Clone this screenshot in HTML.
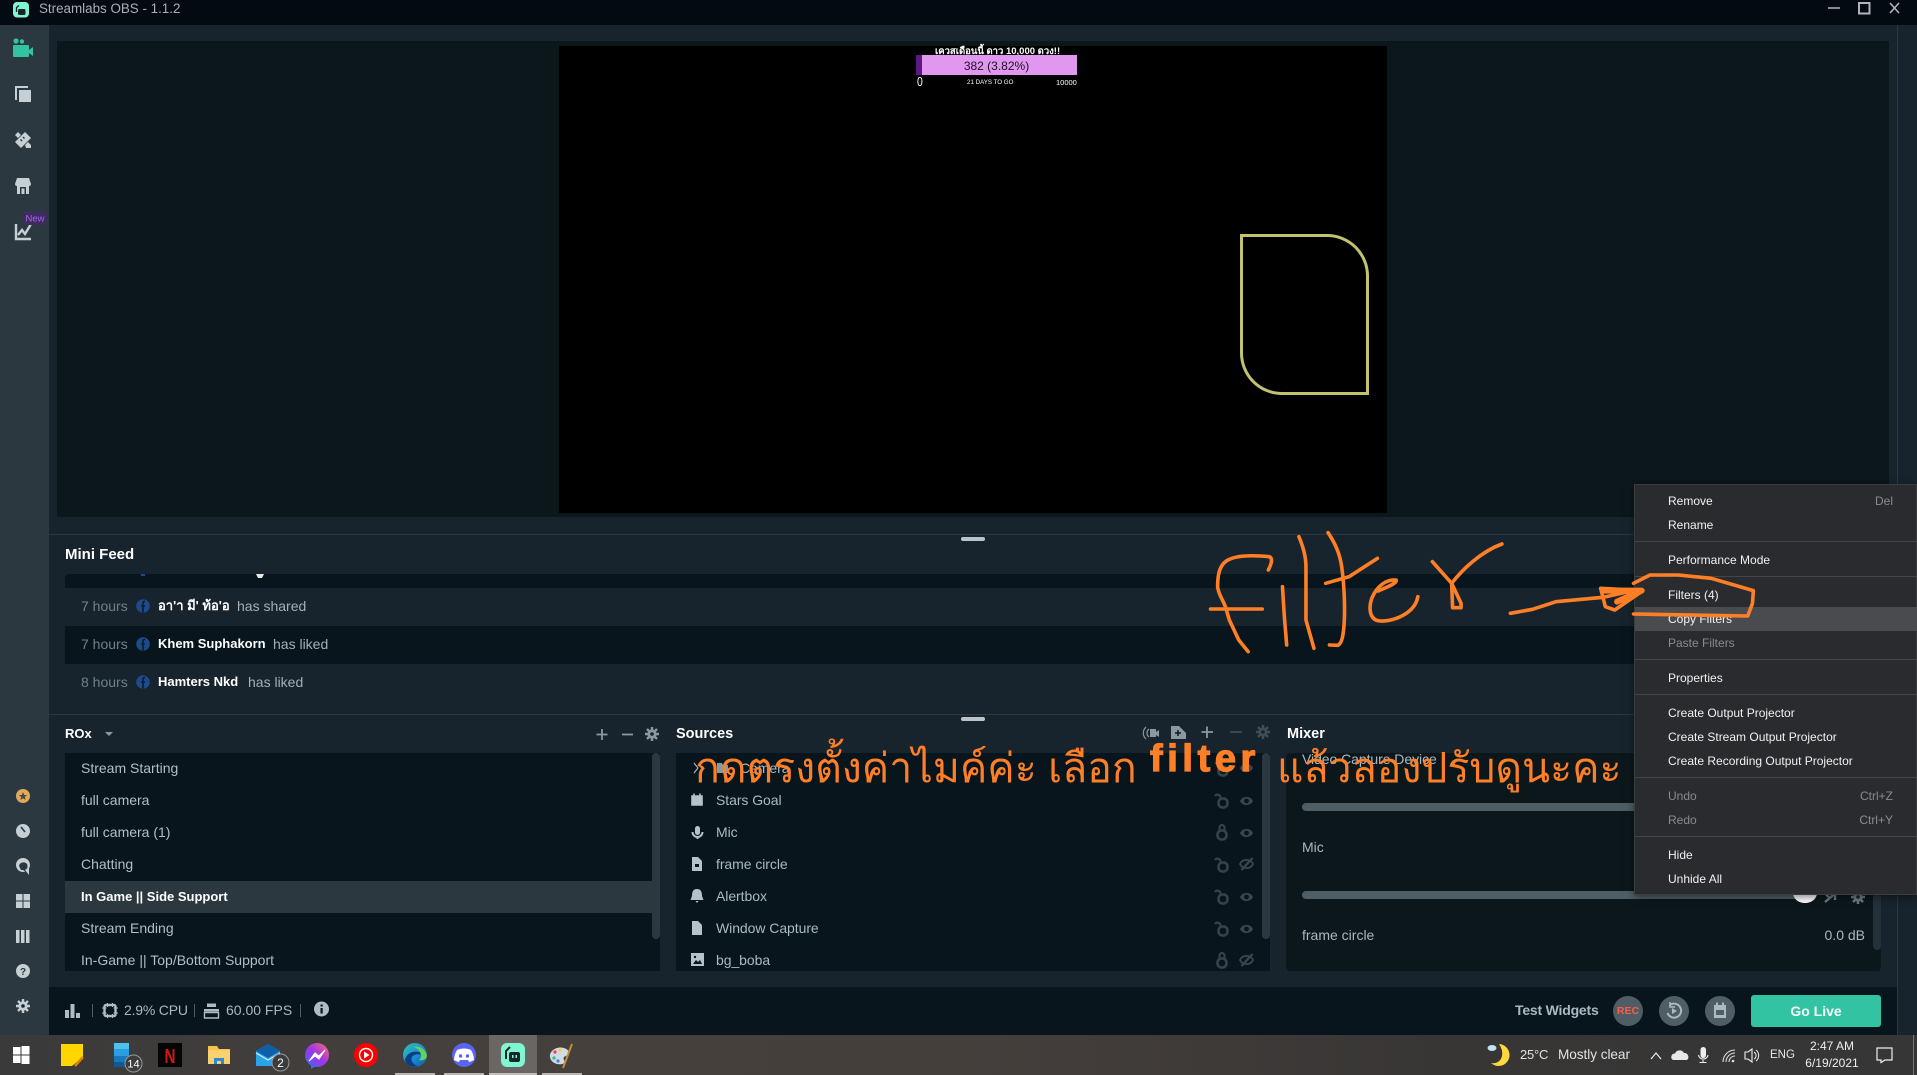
<!DOCTYPE html>
<html><head><meta charset="utf-8"><title>Streamlabs OBS</title>
<style>
*{box-sizing:border-box}
html,body{margin:0;padding:0;width:1917px;height:1075px;overflow:hidden;background:#17242d;font-family:"Liberation Sans","DejaVu Sans","Noto Sans CJK SC",sans-serif}
.a{position:absolute}
.t{position:absolute;white-space:nowrap;line-height:20px;height:20px}
.m{position:absolute;left:1668px;white-space:nowrap;line-height:20px;height:20px;font-size:12px;color:#f1f1f1}
.d{color:#8a8b8e}
.sep{position:absolute;left:1635px;width:282px;height:1px;background:#444547}
.s{font-size:14px;color:#b1bfc5;left:81px}
.src{font-size:14px;letter-spacing:-.06px;color:#a9bac2;left:716px}
.h{font-size:14.5px;font-weight:bold;color:#fff}
.fd{font-size:14px}
.g{color:#70808a}.w{color:#fff;font-weight:bold;font-size:13px}.l{color:#a3b0b7}
.f{font-size:14px;color:#a9b8c0}
.th{color:#ff7f27;font-family:"Liberation Sans","DejaVu Sans","WenQuanYi Zen Hei","Noto Sans CJK SC",sans-serif;font-size:41px;line-height:50px;height:50px;position:absolute;white-space:nowrap}
svg{position:absolute;left:0;top:0}
</style></head>
<body>
<!-- title bar -->
<div class="a" style="left:0;top:0;width:1917px;height:25px;background:#040a12"></div>
<div class="t" style="left:39px;top:-1px;font-size:13.4px;color:#a6b0b6">Streamlabs OBS - 1.1.2</div>
<!-- nav -->
<div class="a" style="left:0;top:25px;width:49px;height:1010px;background:#2b383f"></div>
<!-- preview -->
<div class="a" style="left:57px;top:41px;width:1832px;height:476px;background:#0c171c"></div>
<div class="a" style="left:559px;top:46px;width:828px;height:467px;background:#000"></div>
<div class="a" style="left:1897px;top:25px;width:1px;height:1010px;background:#2b383f"></div>
<!-- goal widget -->
<div class="t" style="left:935px;top:42px;font-size:9.5px;font-weight:bold;color:#fff">เควสเดือนนี้ ดาว 10,000 ดวง!!</div>
<div class="a" style="left:916px;top:55px;width:161px;height:20px;background:#e196f0"></div>
<div class="a" style="left:916px;top:55px;width:6px;height:20px;background:#5c1780"></div>
<div class="t" style="left:916px;top:56px;width:161px;text-align:center;font-size:12px;color:#1c1420">382 (3.82%)</div>
<div class="t" style="left:917px;top:72px;font-size:13px;color:#fff;transform-origin:0 50%;transform:scaleX(.8)">0</div>
<div class="t" style="left:967px;top:73px;font-size:6.2px;color:#fff">21 DAYS TO GO</div>
<div class="t" style="left:1056px;top:73px;font-size:7.5px;color:#fff">10000</div>
<div class="a" style="left:1240px;top:234px;width:129px;height:161px;border:3px solid #c3c36e;border-radius:0 42px 0 42px"></div>
<!-- dividers -->
<div class="a" style="left:49px;top:534px;width:1848px;height:1px;background:#2b383f"></div>
<div class="a" style="left:961px;top:537px;width:24px;height:4px;border-radius:2px;background:#b9c3c8"></div>
<div class="a" style="left:49px;top:714px;width:1848px;height:1px;background:#2b383f"></div>
<div class="a" style="left:961px;top:717px;width:24px;height:4px;border-radius:2px;background:#b9c3c8"></div>
<!-- mini feed -->
<div class="t h" style="left:65px;top:545px;font-size:15px">Mini Feed</div>
<div class="a" style="left:65px;top:574px;width:1816px;height:14px;background:#08151d;border-radius:4px 4px 0 0"></div>
<div class="a" style="left:65px;top:626px;width:1816px;height:38px;background:#08151d"></div>
<div class="t fd" style="left:81px;top:596px"><span class="g">7 hours</span></div>
<div class="t fd w" style="left:158px;top:596px">อา'า มี' ท้อ'อ</div>
<div class="t fd l" style="left:237px;top:596px">has shared</div>
<div class="t fd" style="left:81px;top:634px"><span class="g">7 hours</span></div>
<div class="t fd w" style="left:158px;top:634px">Khem Suphakorn</div>
<div class="t fd l" style="left:273px;top:634px">has liked</div>
<div class="t fd" style="left:81px;top:672px"><span class="g">8 hours</span></div>
<div class="t fd w" style="left:158px;top:672px">Hamters Nkd</div>
<div class="t fd l" style="left:248px;top:672px">has liked</div>
<!-- scenes -->
<div class="t h" style="left:65px;top:724px;font-size:13px">ROx</div>
<div class="a" style="left:65px;top:753px;width:595px;height:218px;background:#08151d"></div>
<div class="a" style="left:652px;top:753px;width:8px;height:186px;border-radius:4px;background:#2b383f"></div>
<div class="a" style="left:65px;top:881px;width:587px;height:32px;background:#2b383f"></div>
<div class="t s" style="top:758px">Stream Starting</div>
<div class="t s" style="top:790px">full camera</div>
<div class="t s" style="top:822px">full camera (1)</div>
<div class="t s" style="top:854px">Chatting</div>
<div class="t s" style="top:887px;color:#fff;font-weight:bold;font-size:13px">In Game || Side Support</div>
<div class="t s" style="top:918px">Stream Ending</div>
<div class="t s" style="top:950px">In-Game || Top/Bottom Support</div>
<!-- sources -->
<div class="t h" style="left:676px;top:724px">Sources</div>
<div class="a" style="left:676px;top:753px;width:594px;height:218px;background:#08151d"></div>
<div class="a" style="left:1262px;top:753px;width:8px;height:186px;border-radius:4px;background:#2b383f"></div>
<div class="t src" style="left:740px;top:758px">Camera</div>
<div class="t src" style="top:790px">Stars Goal</div>
<div class="t src" style="top:822px">Mic</div>
<div class="t src" style="top:854px">frame circle</div>
<div class="t src" style="top:886px">Alertbox</div>
<div class="t src" style="top:918px">Window Capture</div>
<div class="t src" style="top:950px">bg_boba</div>
<!-- mixer -->
<div class="t h" style="left:1287px;top:724px">Mixer</div>
<div class="a" style="left:1286px;top:753px;width:595px;height:218px;background:#0c171c;border-radius:4px"></div>
<div class="a" style="left:1873px;top:753px;width:8px;height:197px;border-radius:4px;background:#24313a"></div>
<div class="t f" style="left:1302px;top:749px;letter-spacing:-.06px">Video Capture Device</div>
<div class="a" style="left:1302px;top:803px;width:560px;height:8px;border-radius:4px;background:#4f5e64"></div>
<div class="t f" style="left:1302px;top:837px">Mic</div>
<div class="a" style="left:1302px;top:891px;width:500px;height:8px;border-radius:4px;background:#4f5e64"></div>
<div class="t f" style="left:1302px;top:925px">frame circle</div>
<div class="t f" style="left:1805px;top:925px;width:60px;text-align:right">0.0 dB</div>
<!-- footer -->
<div class="a" style="left:49px;top:987px;width:1848px;height:48px;background:#08151d"></div>
<div class="t f" style="left:124px;top:1000px;letter-spacing:-.2px">2.9% CPU</div>
<div class="t f" style="left:226px;top:1000px">60.00 FPS</div>
<div class="a" style="left:92px;top:1004px;width:1px;height:13px;background:#4f5e64"></div>
<div class="a" style="left:194px;top:1004px;width:1px;height:13px;background:#4f5e64"></div>
<div class="a" style="left:300px;top:1004px;width:1px;height:13px;background:#4f5e64"></div>
<div class="t" style="left:1515px;top:1000px;font-size:14px;font-weight:bold;color:#a9bac2;letter-spacing:-.2px">Test Widgets</div>
<div class="a" style="left:1613px;top:996px;width:30px;height:30px;border-radius:50%;background:#4f5e64"></div>
<div class="t" style="left:1613px;top:1001px;width:30px;text-align:center;font-size:10.5px;font-weight:bold;color:#ff5a45">REC</div>
<div class="a" style="left:1659px;top:996px;width:30px;height:30px;border-radius:50%;background:#4f5e64"></div>
<div class="a" style="left:1705px;top:996px;width:30px;height:30px;border-radius:50%;background:#4f5e64"></div>
<div class="a" style="left:1751px;top:995px;width:130px;height:32px;border-radius:3px;background:#31c3a2"></div>
<div class="t" style="left:1751px;top:1001px;width:130px;text-align:center;font-size:14px;font-weight:bold;color:#f4fffb">Go Live</div>
<!-- taskbar -->
<div class="a" style="left:0;top:1035px;width:1917px;height:40px;background:linear-gradient(90deg,#3a3a3a 0,#46403d 25%,#453f3c 50%,#383635 75%,#363636 100%)"></div>
<div class="a" style="left:489px;top:1035px;width:48px;height:40px;background:#6a6663"></div>
<div class="a" style="left:395px;top:1073px;width:40px;height:2px;background:#b8b5b3"></div>
<div class="a" style="left:444px;top:1073px;width:40px;height:2px;background:#b8b5b3"></div>
<div class="a" style="left:489px;top:1073px;width:48px;height:2px;background:#c2bfbd"></div>
<div class="a" style="left:542px;top:1073px;width:40px;height:2px;background:#b8b5b3"></div>
<div class="a" style="left:1913px;top:1035px;width:1px;height:40px;background:#777"></div>
<div class="t" style="left:1520px;top:1045px;font-size:13px;color:#e2e2e2;letter-spacing:-.2px">25°C</div>
<div class="t" style="left:1558px;top:1045px;font-size:13.6px;color:#e2e2e2;letter-spacing:-.05px">Mostly clear</div>
<div class="t" style="left:1770px;top:1045px;font-size:11.5px;color:#e6e6e6">ENG</div>
<div class="t" style="left:1792px;top:1036px;width:80px;text-align:center;font-size:12px;color:#eee">2:47 AM</div>
<div class="t" style="left:1792px;top:1053px;width:80px;text-align:center;font-size:12px;color:#eee">6/19/2021</div>

<!-- icon layer -->
<svg width="1917" height="1075" viewBox="0 0 1917 1075" fill="none">
<defs>
<g id="eye"><path d="M-6.5 0C-4 -5.5 4 -5.5 6.5 0C4 5.5 -4 5.5 -6.5 0Z" fill="#3a474e"/><circle r="2.4" fill="#08151d"/></g>
<g id="eyeoff"><path d="M-6.5 0C-4 -5.5 4 -5.5 6.5 0C4 5.5 -4 5.5 -6.5 0Z" stroke="#3a474e" stroke-width="1.8"/><path d="M-5 6L6 -6" stroke="#3a474e" stroke-width="2.2"/></g>
<g id="lock"><rect x="-4.5" y="-1.5" width="9" height="9" rx="4" stroke="#36434a" stroke-width="2.6"/><path d="M-2.5 -2V-4.5A2.5 2.5 0 0 1 2.5 -4.5V-2" stroke="#36434a" stroke-width="2.2"/></g>
<g id="ulock"><rect x="-3.5" y="-1.5" width="9" height="9" rx="4" stroke="#36434a" stroke-width="2.6"/><path d="M-1.5 -2.5A3 3 0 0 0 -7 -4" stroke="#36434a" stroke-width="2.2"/></g>
<g id="gear"><circle r="4.6" fill="currentColor"/><path d="M0 -7V7M-7 0H7M-5 -5L5 5M-5 5L5 -5" stroke="currentColor" stroke-width="2.4"/><circle r="4" fill="currentColor"/><circle r="1.8" fill="#17242d"/></g>
</defs>
<!-- title logo -->
<rect x="13" y="2" width="16" height="15.5" rx="4" fill="#80f5d2"/><rect x="18" y="9" width="7.5" height="6" rx="1.5" fill="#16262b"/><path d="M16.5 12V7.5L19 5.5" stroke="#16262b" stroke-width="1.3"/>
<!-- window controls -->
<path d="M1828 8H1840" stroke="#b0b5b8" stroke-width="1.5"/><rect x="1859" y="3" width="10.5" height="10.5" stroke="#b0b5b8" stroke-width="2"/><path d="M1890 3L1899 13M1899 3L1890 13" stroke="#b0b5b8" stroke-width="1.6"/>
<!-- nav top -->
<circle cx="16" cy="41" r="2.6" fill="#31c3a2"/><circle cx="22" cy="41.5" r="2.2" fill="#31c3a2"/><rect x="13" y="45" width="16" height="12" rx="1" fill="#31c3a2"/><path d="M29 50L33 47V56L29 53Z" fill="#31c3a2"/>
<path d="M15 86H28V88H17V100H15Z" fill="#c6cfd3"/><rect x="19" y="90" width="12" height="12" fill="#c6cfd3"/>
<path d="M25 132L31 138L21 148L15 142Z" fill="#c6cfd3"/><path d="M18 132L21 135L18 138L15 135Z M28 142L31 145V148H26L25 145Z" fill="#c6cfd3"/><path d="M23 137L24.5 138.5M20.5 139.5L22 141" stroke="#2b383f" stroke-width="1.4"/>
<path d="M17 178H29L31 184C31 186 29 186 29 186V194H17V186S15 186 15 184Z" fill="#c6cfd3"/><rect x="20" y="187" width="6" height="7" fill="#2b383f"/><rect x="21.5" y="188.5" width="3" height="5.5" fill="#c6cfd3"/>
<path d="M16 224V239H31" stroke="#c6cfd3" stroke-width="2.4"/><path d="M18 235L22 230L25 234L31 224" stroke="#c6cfd3" stroke-width="2.4"/>
<rect x="23" y="211" width="24" height="14" rx="3" fill="#3b2d5c"/><text x="35" y="221.5" text-anchor="middle" font-family="Liberation Sans" font-size="9.5" fill="#b25cff">New</text>
<!-- nav bottom -->
<circle cx="23" cy="796" r="7" fill="#e0a95a"/><path d="M23 792L24.2 795H27L24.8 797L25.6 800L23 798.3L20.4 800L21.2 797L19 795H21.8Z" fill="#4a4a3e"/>
<circle cx="23" cy="831" r="7" fill="#c6cfd3"/><path d="M21 827L25 832" stroke="#2b383f" stroke-width="1.6"/>
<circle cx="23" cy="865" r="7" fill="#c6cfd3"/><path d="M19 866A4.5 4.5 0 0 1 27.5 865L27 873L23 870H21Z" fill="#2b383f"/><path d="M25 870L29 875L29 867Z" fill="#c6cfd3"/>
<rect x="16" y="894" width="6.5" height="6.5" fill="#c6cfd3"/><rect x="23.5" y="894" width="6.5" height="6.5" fill="#c6cfd3"/><rect x="16" y="901.5" width="6.5" height="6.5" fill="#c6cfd3"/><rect x="23.5" y="901.5" width="6.5" height="6.5" fill="#c6cfd3"/>
<rect x="16" y="930" width="3.5" height="13" fill="#c6cfd3"/><rect x="21" y="930" width="3.5" height="13" fill="#c6cfd3"/><rect x="26" y="930" width="3.5" height="13" fill="#c6cfd3"/>
<circle cx="23" cy="971" r="7" fill="#c6cfd3"/><text x="23" y="975" text-anchor="middle" font-family="Liberation Sans" font-weight="bold" font-size="10" fill="#2b383f">?</text>
<use href="#gear" x="23" y="1006" color="#c6cfd3"/>
<!-- feed partial row + fb -->
<path d="M256 574H264L262 578H258Z" fill="#fff" opacity=".9"/><path d="M141 574H145V576H141Z" fill="#1c4a8c"/>
<g fill="#1c4a8c"><circle cx="143" cy="606" r="6.8"/><circle cx="143" cy="644" r="6.8"/><circle cx="143" cy="682" r="6.8"/></g>
<g stroke="#0e1c26" stroke-width="1.6"><path d="M145 601.5H144A1.5 1.5 0 0 0 143 603V612.5M141 606H145"/><path d="M145 639.5H144A1.5 1.5 0 0 0 143 641V650.5M141 644H145"/><path d="M145 677.5H144A1.5 1.5 0 0 0 143 679V688.5M141 682H145"/></g>
<path d="M105 732L113 732 109 736Z" fill="#8a98a0"/>
<!-- scene header -->
<path d="M602 729V740M596.5 734.5H607.5M622 734.5H633" stroke="#8a98a0" stroke-width="1.8"/><use href="#gear" x="652" y="734" color="#8a98a0"/>
<!-- sources header -->
<path d="M1146 727A8 8 0 0 0 1146 739M1149 729A5 5 0 0 0 1149 737" stroke="#8a98a0" stroke-width="1.2"/><rect x="1150" y="729" width="6" height="8" fill="#8a98a0"/><path d="M1156 732L1159 730V737L1156 735Z" fill="#8a98a0"/>
<path d="M1171 726H1179L1186 733V739H1171Z" fill="#8a98a0"/><path d="M1178 730V736M1175 733H1181" stroke="#0c171c" stroke-width="1.5"/>
<path d="M1207 726.5V738M1201.5 732H1213" stroke="#8a98a0" stroke-width="1.8"/><path d="M1230 732H1242" stroke="#3f4d54" stroke-width="1.8"/><use href="#gear" x="1263" y="732" color="#3f4d54"/>
<!-- sources rows -->
<path d="M694 763L698 768L694 773" stroke="#a9bac2" stroke-width="1.1"/><path d="M717 763H722L723 765H728V773H717Z" fill="#8a98a0"/>
<path d="M692 796H702V805H692Z M694 793.5V796M700 793.5V796" fill="#b6c2c8" stroke="#b6c2c8" stroke-width="1.6"/>
<rect x="695" y="826" width="5" height="9" rx="2.5" fill="#b6c2c8"/><path d="M692.5 832A5 5 0 0 0 702.5 832M697.5 837V839" stroke="#b6c2c8" stroke-width="2"/>
<path d="M692 857H698L702 861V871H692Z" fill="#b6c2c8"/><rect x="695" y="864" width="4" height="3" fill="#08151d"/>
<path d="M697 889C701 889 702 892 702 896L703.5 900H690.5L692 896C692 892 693 889 697 889ZM695.5 901H698.5L697 903Z" fill="#b6c2c8"/>
<path d="M692 921H698L702 925V935H692Z" fill="#b6c2c8"/>
<rect x="691" y="953" width="13" height="13" fill="#b6c2c8"/><path d="M693 964L696 960L698 962L700 960L702 964Z" fill="#08151d"/><circle cx="695" cy="957" r="1.2" fill="#08151d"/>
<use href="#ulock" x="1222" y="768"/><use href="#eye" x="1246.5" y="768"/>
<use href="#ulock" x="1222" y="800"/><use href="#eye" x="1246.5" y="801"/>
<use href="#lock" x="1222" y="832"/><use href="#eye" x="1246.5" y="833"/>
<use href="#ulock" x="1222" y="864"/><use href="#eyeoff" x="1246.5" y="864"/>
<use href="#ulock" x="1222" y="896"/><use href="#eye" x="1246.5" y="897"/>
<use href="#ulock" x="1222" y="928"/><use href="#eye" x="1246.5" y="929"/>
<use href="#lock" x="1222" y="960"/><use href="#eyeoff" x="1246.5" y="960"/>
<!-- mixer icons -->
<path d="M1793 890H1817V893A12 10 0 0 1 1793 893Z" fill="#fff"/><rect x="1802" y="892" width="2" height="3" fill="#0c171c"/><rect x="1806" y="892" width="2" height="3" fill="#0c171c"/><path d="M1825 902L1831 897L1835 893V900M1824 893L1830 898" stroke="#6f7c83" stroke-width="2.4"/><use href="#gear" x="1858" y="897" color="#6f7c83"/>
<!-- footer icons -->
<g fill="#b0bcc2"><rect x="65" y="1010" width="4" height="8"/><rect x="70.5" y="1004" width="4" height="14"/><rect x="76" y="1013" width="4" height="5"/></g>
<rect x="104.5" y="1005" width="11" height="11" rx="1.5" stroke="#b0bcc2" stroke-width="2.4"/><path d="M102 1008H118M102 1013H118M107.5 1003V1018M112.5 1003V1018" stroke="#b0bcc2" stroke-width="1"/><rect x="106.5" y="1007" width="7" height="7" fill="#08151d"/>
<path d="M207 1003.5H216V1007H207Z" fill="#b0bcc2"/><rect x="204" y="1009" width="15" height="2.5" fill="#b0bcc2"/><path d="M204.5 1012.5H218.5V1018H204.5Z" stroke="#b0bcc2" stroke-width="1.4" fill="none"/>
<circle cx="321.5" cy="1009" r="7.5" fill="#b0bcc2"/><rect x="320.5" y="1008" width="2.2" height="5.5" fill="#08151d"/><rect x="320.5" y="1004.5" width="2.2" height="2" fill="#08151d"/>
<path d="M1670 1005A7 7 0 1 1 1667.5 1013" stroke="#a9bac2" stroke-width="2"/><path d="M1670 1002V1007H1675" stroke="#a9bac2" stroke-width="1.6"/><path d="M1672 1008L1677 1011L1672 1014Z" fill="#a9bac2"/>
<rect x="1714" y="1005" width="12" height="13" fill="#a9bac2"/><rect x="1716" y="1002.5" width="2" height="3" fill="#a9bac2"/><rect x="1722" y="1002.5" width="2" height="3" fill="#a9bac2"/><rect x="1716" y="1010" width="8" height="5" fill="#4f5e64"/>
<!-- taskbar left -->
<g fill="#fff"><rect x="13" y="1047" width="7.5" height="7.5"/><rect x="21.5" y="1046" width="8" height="8.5"/><rect x="13" y="1055.5" width="7.5" height="7.5"/><rect x="21.5" y="1055.5" width="8" height="8.5"/></g>
<rect x="61" y="1044" width="22" height="22" fill="#ffd600"/><path d="M83 1057V1066H72Z" fill="#3a3a30"/><path d="M75 1066L83 1057" stroke="#d8820f" stroke-width="2.5"/>
<rect x="114" y="1043" width="15" height="6" fill="#4cc2f1"/><rect x="114" y="1049" width="15" height="7" fill="#2b9de0"/><rect x="114" y="1056" width="15" height="6" fill="#1778bd"/><rect x="114" y="1062" width="15" height="5" fill="#0d5a94"/>
<circle cx="133.5" cy="1063.5" r="8.5" fill="#3c3c3c" stroke="#999" stroke-width="1"/><text x="133.5" y="1067.5" text-anchor="middle" font-family="Liberation Sans" font-size="11" fill="#fff">14</text>
<rect x="158" y="1043" width="24" height="24" fill="#050505"/><text x="170" y="1063" text-anchor="middle" font-family="Liberation Sans" font-weight="bold" font-size="20" fill="#d01818" textLength="11" lengthAdjust="spacingAndGlyphs">N</text>
<path d="M208 1046H217L219 1049H230V1064H208Z" fill="#f4c24d"/><rect x="208" y="1050" width="22" height="14" fill="#f9d26f"/><path d="M214 1064V1058H224V1064H221V1061H217V1064Z" fill="#2d88d8"/>
<path d="M256 1051L268 1044L280 1051V1066H256Z" fill="#2aa3e8"/><path d="M256 1051L268 1058L280 1051L268 1044Z" fill="#0f5ea8"/><path d="M256 1053L268 1060L280 1053" stroke="#cfeaf9" stroke-width="1.2"/>
<circle cx="280.5" cy="1062.5" r="8.5" fill="#3c3c3c" stroke="#999"/><text x="280.5" y="1067" text-anchor="middle" font-family="Liberation Sans" font-size="12" fill="#fff">2</text>
<defs><linearGradient id="ms" x1="0" y1="1" x2="1" y2="0"><stop offset="0" stop-color="#3a6cf0"/><stop offset=".5" stop-color="#a034e8"/><stop offset="1" stop-color="#ff6f6f"/></linearGradient><linearGradient id="ed" x1="0" y1="0" x2="1" y2="1"><stop offset="0" stop-color="#35c6a8"/><stop offset=".5" stop-color="#1b90da"/><stop offset="1" stop-color="#0d5aa8"/></linearGradient></defs>
<circle cx="317" cy="1055" r="12" fill="url(#ms)"/><path d="M309 1061L315 1053L319 1056L325 1050L319 1059L315 1056Z" fill="#fff" stroke="#fff"/><path d="M311 1064V1069L316 1066Z" fill="#3a6cf0"/>
<circle cx="366" cy="1055" r="12" fill="#f00"/><circle cx="366" cy="1055" r="6.5" stroke="#fff" stroke-width="1.4"/><path d="M364 1051.5L369.5 1055L364 1058.5Z" fill="#fff"/>
<circle cx="415" cy="1055" r="12" fill="url(#ed)"/><path d="M405 1060C407 1050 421 1049 425 1057C423 1055 416 1052 412 1057C410 1061 414 1065 418 1066C412 1068 406 1065 405 1060Z" fill="#0b3f7f"/><path d="M413 1047C419 1045 426 1049 427 1056C426 1060 422 1061 419 1060C424 1056 419 1048 413 1047Z" fill="#63d35a"/>
<circle cx="464" cy="1055" r="12" fill="#5865f2"/><path d="M457 1050C461 1048 467 1048 471 1050C473 1053 474 1057 474 1060C472 1061 470 1062 469 1062L468 1060H460L459 1062C458 1062 456 1061 454 1060C454 1057 455 1053 457 1050Z" fill="#fff"/><circle cx="460.5" cy="1056" r="1.7" fill="#5865f2"/><circle cx="467.5" cy="1056" r="1.7" fill="#5865f2"/>
<rect x="501" y="1043" width="24" height="24" rx="6" fill="#80f5d2"/><rect x="509" y="1052" width="11" height="10" rx="2" fill="#16262b"/><rect x="512" y="1055" width="1.5" height="3" fill="#80f5d2"/><rect x="515.5" y="1055" width="1.5" height="3" fill="#80f5d2"/><path d="M506 1059V1051L510 1047" stroke="#16262b" stroke-width="2"/>
<path d="M550 1057C549 1050 558 1046 564 1048C570 1050 570 1054 566 1056C562 1057 564 1060 565 1062C563 1066 551 1065 550 1057Z" fill="#cfdbe5"/><circle cx="555" cy="1052" r="1.6" fill="#e44"/><circle cx="560" cy="1050" r="1.6" fill="#fc3"/><circle cx="554" cy="1058" r="1.6" fill="#3b8"/><circle cx="558" cy="1061" r="1.6" fill="#38d"/><path d="M563 1068L572 1044" stroke="#c98a3d" stroke-width="2"/>
<!-- tray -->
<path d="M1499 1044A11 11 0 1 1 1491 1063C1501 1065 1506 1054 1499 1044Z" fill="#ffd83b"/><ellipse cx="1492" cy="1048" rx="4.5" ry="3" fill="#c3e2f5"/>
<path d="M1651 1059L1656 1053L1661 1059" stroke="#eee" stroke-width="1.2"/>
<path d="M1673 1060A3.5 3.5 0 0 1 1675 1053.5A5 5 0 0 1 1684 1053A4 4 0 0 1 1687 1060Z" fill="#e8e8e8"/>
<rect x="1700.5" y="1047" width="5.5" height="11" rx="2.7" fill="#eee"/><path d="M1698.5 1055A4.8 4.8 0 0 0 1708 1055M1703 1060V1062M1699.5 1062.5H1706.5" stroke="#eee" stroke-width="1.1"/>
<path d="M1723 1062A12 12 0 0 1 1735 1050M1726 1062A9 9 0 0 1 1735 1053M1729 1062A6 6 0 0 1 1735 1056" stroke="#ddd" stroke-width="1.1"/><circle cx="1733" cy="1061" r="1.3" fill="#ddd"/>
<path d="M1745 1052H1748L1752 1049V1062L1748 1059H1745Z" stroke="#eee" stroke-width="1.1"/><path d="M1754 1052A4 4 0 0 1 1754 1059M1756 1050A7 7 0 0 1 1756 1061" stroke="#eee" stroke-width="1"/>
<path d="M1877 1048H1892V1060H1885L1881 1062.5V1060H1877Z" stroke="#eee" stroke-width="1.2" fill="#363636"/>
</svg>

<!-- context menu -->
<div class="a" style="left:1634px;top:484px;width:283px;height:411px;background:#2a2b2e;border:1px solid #3c3d40;box-shadow:0 2px 8px rgba(0,0,0,.5)"></div>
<div class="a" style="left:1635px;top:607px;width:282px;height:24px;background:#4a4b4e"></div>
<div class="m" style="top:491px">Remove</div><div class="m d" style="left:1873px;top:491px;width:20px;text-align:right">Del</div>
<div class="m" style="top:515px">Rename</div>
<div class="sep" style="top:541px"></div>
<div class="m" style="top:550px">Performance Mode</div>
<div class="sep" style="top:576px"></div>
<div class="m" style="top:585px">Filters (4)</div>
<div class="m" style="top:609px">Copy Filters</div>
<div class="m d" style="top:633px">Paste Filters</div>
<div class="sep" style="top:659px"></div>
<div class="m" style="top:668px">Properties</div>
<div class="sep" style="top:694px"></div>
<div class="m" style="top:703px">Create Output Projector</div>
<div class="m" style="top:727px">Create Stream Output Projector</div>
<div class="m" style="top:751px">Create Recording Output Projector</div>
<div class="sep" style="top:777px"></div>
<div class="m d" style="top:786px">Undo</div><div class="m d" style="left:1853px;top:786px;width:40px;text-align:right">Ctrl+Z</div>
<div class="m d" style="top:810px">Redo</div><div class="m d" style="left:1853px;top:810px;width:40px;text-align:right">Ctrl+Y</div>
<div class="sep" style="top:836px"></div>
<div class="m" style="top:845px">Hide</div>
<div class="m" style="top:869px">Unhide All</div>

<!-- annotations -->
<div class="th" style="left:695px;top:743px">กดตรงตั้งค่าไมค์ค่ะ เลือก</div>
<div class="t" style="left:1150px;top:745px;font-size:38px;line-height:28px;height:28px;font-weight:bold;color:#ff7f27;letter-spacing:4.6px;-webkit-text-stroke:1.2px #ff7f27">filter</div>
<div class="th" style="left:1277px;top:743px">แล้วลองปรับดูนะคะ</div>
<svg width="1917" height="1075" viewBox="0 0 1917 1075" fill="none">
<g transform="translate(1180 520) scale(0.47 0.3333)" stroke="#ff7f27" stroke-width="3.6" stroke-linejoin="round" stroke-linecap="round">
<path vector-effect="non-scaling-stroke" d="M188 150C195 130 198 115 190 110C160 106 125 105 105 118C85 130 80 160 80 200C82 225 92 240 97 262L105 300L125 360L145 395"/>
<path vector-effect="non-scaling-stroke" d="M65 267H175"/>
<path vector-effect="non-scaling-stroke" d="M218 200L222 290L227 375"/>
<path vector-effect="non-scaling-stroke" d="M253 50C262 80 268 110 268 140V300L285 385"/>
<path vector-effect="non-scaling-stroke" d="M315 38C330 70 340 100 344 140C350 200 352 280 348 330C346 360 342 372 336 376L318 375"/>
<path vector-effect="non-scaling-stroke" d="M310 190L360 170L420 115"/>
<path vector-effect="non-scaling-stroke" d="M422 213C442 200 462 190 460 180C440 178 420 195 408 235C400 270 405 300 425 303C455 305 500 280 506 230"/>
<path vector-effect="non-scaling-stroke" d="M537 125L578 190L598 250V263H580L578 190C600 150 640 95 685 72"/>
<path vector-effect="non-scaling-stroke" d="M703 280L750 268L800 245L900 232L970 210"/>
<path vector-effect="non-scaling-stroke" d="M895 205L985 212L925 270L905 260Z"/>
<path vector-effect="non-scaling-stroke" stroke-width="6" d="M900 212L982 212L930 245"/>
<path vector-effect="non-scaling-stroke" d="M965 190L1000 165L1060 165L1130 175L1220 212L1218 250L1208 288L965 282"/>
</g>
</svg>
</body></html>
